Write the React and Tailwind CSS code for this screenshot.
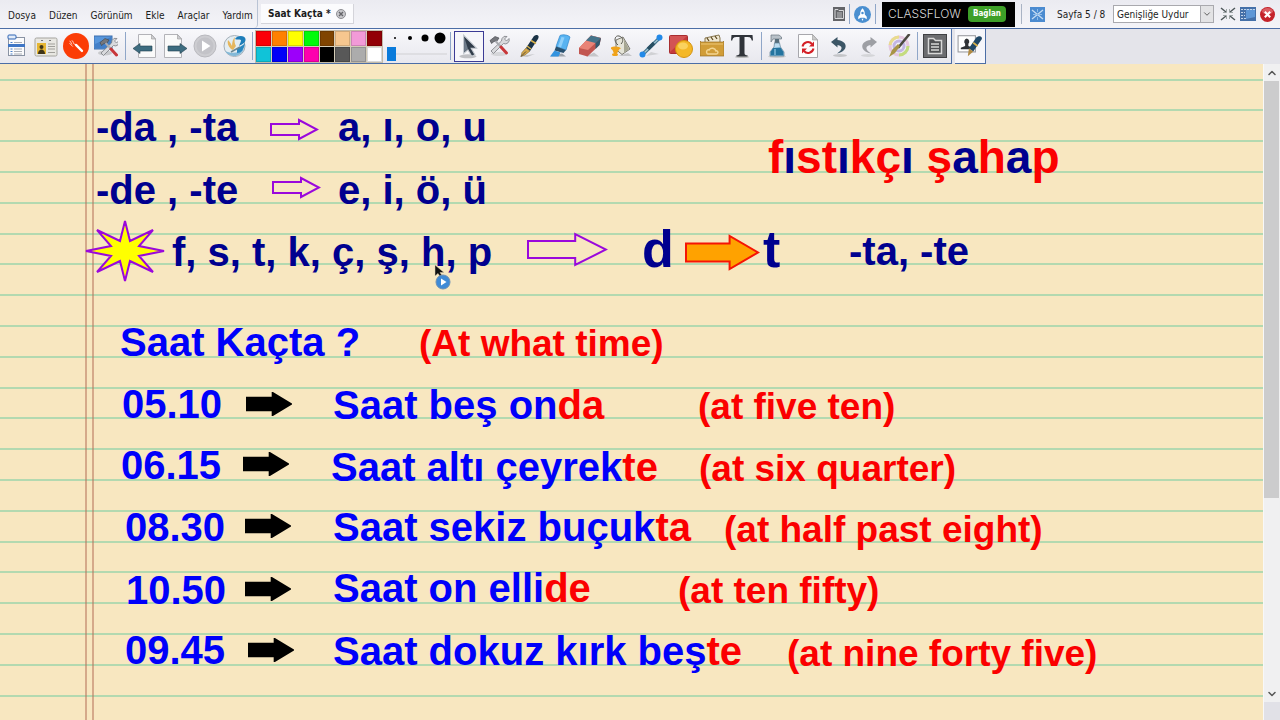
import { useState } from "react";
import { ChevronDown, ChevronUp } from "lucide-react";

const NAVY = "text-[#00008f]";
const BLUE = "text-[#0000fa]";
const RED = "text-[#fb0000]";

const menus = ["Dosya", "Düzen", "Görünüm", "Ekle", "Araçlar", "Yardım"];

const palette = [
  { name: "Kırmızı", cls: "bg-[#fb0007]" },
  { name: "Turuncu", cls: "bg-[#ff8000]" },
  { name: "Sarı", cls: "bg-[#ffff00]" },
  { name: "Yeşil", cls: "bg-[#00fb0a]" },
  { name: "Kahverengi", cls: "bg-[#804400]" },
  { name: "Ten", cls: "bg-[#f6c78f]" },
  { name: "Pembe", cls: "bg-[#f29ad8]" },
  { name: "Bordo", cls: "bg-[#920006]" },
  { name: "Turkuaz", cls: "bg-[#10c3d8]" },
  { name: "Mavi", cls: "bg-[#0000f8]" },
  { name: "Mor", cls: "bg-[#9c00fa]" },
  { name: "Eflatun", cls: "bg-[#fd00ae]" },
  { name: "Siyah", cls: "bg-black" },
  { name: "Koyu gri", cls: "bg-[#585858]" },
  { name: "Gri", cls: "bg-[#acacac]" },
  { name: "Beyaz", cls: "bg-white" },
];

// Text objects that sit freely on the slide
const labels = [
  { x: 96, y: 43, size: "text-[40px]", parts: [["-da , -ta", NAVY]] },
  { x: 338, y: 43, size: "text-[40px]", parts: [["a, ı, o, u", NAVY]] },
  { x: 96, y: 106, size: "text-[40px]", parts: [["-de , -te", NAVY]] },
  { x: 338, y: 106, size: "text-[40px]", parts: [["e, i, ö, ü", NAVY]] },
  { x: 172, y: 168, size: "text-[40px]", parts: [["f, s, t, k, ç, ş, h, p", NAVY]] },
  {
    x: 768,
    y: 70,
    size: "text-[46px]",
    parts: [
      ["f", RED], ["ı", NAVY], ["st", RED], ["ı", NAVY], ["kç", RED], ["ı", NAVY],
      [" ş", RED], ["a", NAVY], ["h", RED], ["a", NAVY], ["p", RED],
    ],
  },
  { x: 642, y: 159, size: "text-[52px]", parts: [["d", NAVY]] },
  { x: 763, y: 159, size: "text-[52px]", parts: [["t", NAVY]] },
  { x: 849, y: 167, size: "text-[40px]", parts: [["-ta, -te", NAVY]] },
  { x: 120, y: 258, size: "text-[40px]", parts: [["Saat Kaçta ?", BLUE]] },
  { x: 419, y: 261, size: "text-[37px]", parts: [["(At what time)", RED]] },
  { x: 122, y: 320, size: "text-[40px]", parts: [["05.10", BLUE]] },
  { x: 333, y: 321, size: "text-[40px]", parts: [["Saat beş on", BLUE], ["da", RED]] },
  { x: 698, y: 324, size: "text-[37px]", parts: [["(at five ten)", RED]] },
  { x: 121, y: 381, size: "text-[40px]", parts: [["06.15", BLUE]] },
  { x: 331, y: 383, size: "text-[40px]", parts: [["Saat altı çeyrek", BLUE], ["te", RED]] },
  { x: 699, y: 386, size: "text-[37px]", parts: [["(at six quarter)", RED]] },
  { x: 125, y: 443, size: "text-[40px]", parts: [["08.30", BLUE]] },
  { x: 333, y: 443, size: "text-[40px]", parts: [["Saat sekiz buçuk", BLUE], ["ta", RED]] },
  { x: 724, y: 447, size: "text-[37px]", parts: [["(at half past eight)", RED]] },
  { x: 126, y: 506, size: "text-[40px]", parts: [["10.50", BLUE]] },
  { x: 333, y: 504, size: "text-[40px]", parts: [["Saat on elli", BLUE], ["de", RED]] },
  { x: 678, y: 508, size: "text-[37px]", parts: [["(at ten fifty)", RED]] },
  { x: 125, y: 566, size: "text-[40px]", parts: [["09.45", BLUE]] },
  { x: 333, y: 567, size: "text-[40px]", parts: [["Saat dokuz kırk beş", BLUE], ["te", RED]] },
  { x: 787, y: 571, size: "text-[37px]", parts: [["(at nine forty five)", RED]] },
];

const arrows = [
  { x: 269, y: 54, w: 50, h: 23, kind: "outline" },
  { x: 271, y: 112, w: 50, h: 23, kind: "outline" },
  { x: 526, y: 168, w: 82, h: 35, kind: "outline" },
  { x: 684, y: 170, w: 76, h: 37, kind: "orange" },
  { x: 246, y: 328, w: 46, h: 24, kind: "black" },
  { x: 243, y: 388, w: 46, h: 24, kind: "black" },
  { x: 245, y: 450, w: 46, h: 24, kind: "black" },
  { x: 245, y: 513, w: 46, h: 24, kind: "black" },
  { x: 248, y: 574, w: 46, h: 24, kind: "black" },
];

function Svg({ children, className = "w-6 h-6", viewBox = "0 0 24 24" }) {
  return (
    <svg viewBox={viewBox} className={className} fill="none" aria-hidden="true">
      {children}
    </svg>
  );
}

const Hammer = () => (
  <>
    <path d="M15 4.500a4 4 0 0 1 5-2l-2.500 2.500 2 2 2.500-2.500a4 4 0 0 1-5.500 5L6.500 19.500 4 17 14.500 7z" fill="#d9dadd" stroke="#7b7d83" strokeWidth=".8" />
    <path d="M3 6.500 8 2.500l4 1.500-2 3-3 .5-2.500 2z" fill="#75777c" stroke="#3f4146" strokeWidth=".6" />
    <path d="m8.500 7 6 6.500" stroke="#a9abb0" strokeWidth="2" />
    <path d="m14 13 5.500 6" stroke="#c8373a" strokeWidth="3" strokeLinecap="round" />
  </>
);

const icons = {
  menu: (
    <Svg>
      <rect x="4.500" y="3.500" width="16" height="18" fill="#fbfbfc" stroke="#8a93a3" />
      <rect x="4" y="1" width="8" height="4" rx="1" fill="#e3ecf8" stroke="#2f64b5" />
      <path d="M4 11.500h17" stroke="#3f76c5" strokeWidth="3" />
      <path d="M10 8.500h8M10 15h8M10 17.500h8M10 20h8" stroke="#a9adb5" />
      <path d="M6.500 8.500h2M6.500 15h2M6.500 17.500h2M6.500 20h2" stroke="#4b80c9" />
    </Svg>
  ),
  profile: (
    <Svg>
      <rect x="1" y="4" width="22" height="18" rx="1.500" fill="#e8e7e2" stroke="#a5a49e" />
      <rect x="3" y="9" width="9" height="11" fill="#e6b633" />
      <circle cx="7.500" cy="13" r="2" fill="#3e3418" />
      <path d="M4 20c0-6 7-6 7 0z" fill="#3e3418" />
      <path d="M14 10h7M14 12.500h7M14 15h7M14 18.500h7" stroke="#a09f9a" />
      <path d="M7 6.500h2M15 6.500h2" stroke="#777" />
    </Svg>
  ),
  redPen: (
    <Svg className="w-[26px] h-[26px]">
      <circle cx="12" cy="12" r="12" fill="#fb3c06" />
      <path d="m12 11 5.500 5.500" stroke="#fff" strokeWidth="2.200" strokeLinecap="round" />
      <path d="M6 7.500c2 0 1 3 2.500 3M8 7c2 0 1 3.500 3 3.500M6 9.500l3 3" stroke="#ffe3da" strokeWidth=".8" />
    </Svg>
  ),
  desktopTools: (
    <Svg>
      <rect x="0" y="2" width="18" height="13" fill="#5796dc" stroke="#3c6eae" />
      <path d="M1 10 17 3v11H1z" fill="#2d68b4" opacity=".5" />
      <ellipse cx="11" cy="19" rx="7" ry="2.500" fill="#c9cacd" />
      <g transform="translate(3 2)"><Hammer /></g>
    </Svg>
  ),
  prev: (
    <Svg>
      <path d="M5.500.5h13l4 4.500v18.500h-17z" fill="#fafafa" stroke="#b3b3b8" />
      <path d="M18.500.5V5h4z" fill="#cfcfd3" stroke="#999" strokeWidth=".6" />
      <path d="m0 14.500 7-5V12h12v5H7v2.500z" fill="#3d6c80" stroke="#24424f" strokeWidth=".6" />
    </Svg>
  ),
  next: (
    <Svg>
      <path d="M1.500.5h13l4 4.500v18.500h-17z" fill="#fafafa" stroke="#b3b3b8" />
      <path d="M14.500.5V5h4z" fill="#cfcfd3" stroke="#999" strokeWidth=".6" />
      <path d="m24 14.500-7-5V12H5v5h12v2.500z" fill="#3d6c80" stroke="#24424f" strokeWidth=".6" />
    </Svg>
  ),
  play: (
    <Svg>
      <circle cx="12" cy="12" r="11" fill="#cdcdd1" stroke="#b9b9be" />
      <circle cx="12" cy="12" r="8.500" fill="#c3c3c8" />
      <path d="m9 6.500 8.500 5.500L9 17.500z" fill="#fff" />
    </Svg>
  ),
  globe: (
    <Svg>
      <circle cx="11.500" cy="12" r="10.500" fill="#e4edf2" stroke="#a4afb8" />
      <path d="M2 17c5 7 15 7 19-2-4 4-13 5-19 2z" fill="#84b9d8" />
      <path d="M8 15C5 12 4 9 5 6c2 2 3 4 4 6 0-4 1-7 3-9-1 5 0 7 1 9l-3 4z" fill="#e6b65c" />
      <path d="M12 5c2-4 10-4 10.500 0S19 10 16 12c1-3 2-4 2-6-2-1-4 0-6-1z" fill="#1d7db9" />
      <path d="M14 15c3-3 6-3 8-6-1 7-4 10-8 10z" fill="#2b88c0" />
      <path d="m8 18 9-5" stroke="#6c8792" strokeWidth="1.500" />
    </Svg>
  ),
  select: (
    <Svg className="w-[26px] h-[26px]">
      <ellipse cx="11" cy="21.500" rx="8" ry="1.800" fill="#bfc0c4" />
      <path d="M7 2v17l4-3.500 3.500 6 3-1.500-3.500-6h5z" fill="#313d4b" stroke="#c5cad1" strokeWidth="1" />
      <path d="M7.500 3.500v14l3.500-3z" fill="#6f7c8b" />
    </Svg>
  ),
  tools: (
    <Svg><ellipse cx="12" cy="20" rx="8" ry="2" fill="#d5d6d9" /><Hammer /></Svg>
  ),
  pen: (
    <Svg>
      <path d="m3 22 15-2-8 3z" fill="#c5c6c9" />
      <path d="M19 1c3 0 3 2 2 4l-8 12-4-3 8-12z" fill="#1b3346" />
      <path d="m14 6.500 5 3M10 12l4 3" stroke="#d9b24c" strokeWidth="1.500" />
      <path d="m9 14 4 3-5 4-4 1.500 1-4z" fill="#d6a84a" stroke="#80652b" strokeWidth=".6" />
      <path d="m4 22.500 5-5" stroke="#343434" strokeWidth=".8" />
    </Svg>
  ),
  highlighter: (
    <Svg>
      <path d="M2 22.500h16l-4-3z" fill="#9fa5ac" />
      <path d="M12 1.500c3-1.500 8-.5 10 1.500l-4 13-10-3.500z" fill="#58b3f1" stroke="#2f86cb" strokeWidth=".7" />
      <path d="m13.500 3 3 .5-3.500 10-3-1z" fill="#8fd0fa" />
      <path d="m8 12.500 10 3.500-2.500 3-9-2.500z" fill="#27506f" />
      <path d="m6.500 16.500 6 2-2 4H2z" fill="#3293df" />
    </Svg>
  ),
  eraser: (
    <Svg>
      <path d="M8 22.500h13l-5-4z" fill="#c5c6c9" />
      <path d="M13 1.500 23 4l-1.500 7-12 11.500L1 20v-6z" fill="#c25650" />
      <path d="m13 1.500 10 2.500-13 12L1 14z" fill="#e98377" />
      <path d="m13 1.500 10 2.500-5.500 5L8 6.500z" fill="#44738a" />
      <path d="m23 4-1.500 7-4 4v-6z" fill="#305a70" />
    </Svg>
  ),
  fill: (
    <Svg>
      <path d="M9 22h14l-4-3z" fill="#c5c6c9" />
      <path d="M7 6 14 3l7 12-8 5.500-6-5z" fill="#e5e4d8" stroke="#6c6b62" strokeWidth=".9" />
      <path d="M15 5.500 20 15l-5 4z" fill="#a6a693" />
      <path d="M9 11C4 7 6 1 10 2s5 5 2 8" stroke="#57574f" strokeWidth="1" />
      <path d="M2 13.500c3-2 9-1 10 1-3 0-3 6-5.500 6S5 16 2 15z" fill="#f0a31a" />
      <ellipse cx="6" cy="20.500" rx="3" ry="1.600" fill="#f0a31a" />
    </Svg>
  ),
  line: (
    <Svg>
      <path d="m7 22 13-2-8-2z" fill="#d0d1d4" />
      <path d="M4 20 20.500 4" stroke="#40738d" strokeWidth="3.500" />
      <path d="M4 20 20.500 4" stroke="#a5c7d4" strokeWidth="1.200" />
      <path d="m9 15 6-6" stroke="#294f63" strokeWidth="3.500" />
      <circle cx="3.500" cy="20.500" r="3" fill="#2289e8" />
      <circle cx="20.500" cy="3.500" r="3" fill="#2289e8" />
    </Svg>
  ),
  shape: (
    <Svg>
      <rect x=".5" y="1.500" width="18" height="18" rx="1" fill="#c53a3c" stroke="#a82d30" />
      <path d="M1 2h17L1 18z" fill="#dc6664" opacity=".6" />
      <circle cx="15" cy="15" r="8.500" fill="#f4b827" stroke="#d4930f" />
      <ellipse cx="14" cy="12" rx="5" ry="3.500" fill="#fad25e" />
    </Svg>
  ),
  media: (
    <Svg>
      <path d="m5 4 14-3 1 3v6H5z" fill="#f0e8d2" stroke="#6f5a2c" strokeWidth=".8" />
      <path d="m7 4 2 3M11 3l2 3M15 2l2 3" stroke="#5e4b22" strokeWidth="1.300" />
      <path d="M1 8h22l1-1v15H0V7z" fill="#d19d38" stroke="#98702a" strokeWidth=".7" />
      <path d="M1 9h22v2H1z" fill="#dfb257" />
      <path d="M9 16c-3-1-3 4-1 4h8c3 0 2-4 0-3-1-3-5-4-7-1z" stroke="#f3d591" strokeWidth="1.500" />
    </Svg>
  ),
  text: (
    <Svg>
      <ellipse cx="12" cy="23" rx="7" ry="1" fill="#bbb" />
      <path d="M1.500 1h21l.5 5.500h-1.200C21 3.500 20 3 17 3h-2.500v16c0 2 1 2.200 3 2.300V22.500h-11v-1.200c2-.1 3-.3 3-2.300V3H7C4 3 3 3.500 2.200 6.500H1z" fill="#30343a" />
    </Svg>
  ),
  spray: (
    <Svg>
      <ellipse cx="12" cy="22.500" rx="9" ry="1.500" fill="#ccc" />
      <path d="M6 1h8l2.500 2v2H8l-2 3z" fill="#b8c1c8" stroke="#6b777f" strokeWidth=".7" />
      <path d="M10 5h4l.5 4h-5z" fill="#566d7a" />
      <path d="M9.500 9h5l1 4 3.500 5v4H5v-4l4-5z" fill="#bcdcf0" stroke="#638396" strokeWidth=".7" />
      <path d="m8 14 7.500-.5 3 4.500v3.500h-13V18z" fill="#24749f" />
      <path d="M10 15v6" stroke="#7fb9d8" strokeWidth="1.500" />
    </Svg>
  ),
  reset: (
    <Svg>
      <path d="M2.500.5h14l5 5.500v17.500h-19z" fill="#fdfdfd" stroke="#a7a7ac" />
      <path d="M16.500.5V6h5z" fill="#ccc" stroke="#999" strokeWidth=".6" />
      <path d="M6.500 12.500a5.500 5.500 0 0 1 9.500-2.500M17.500 14.500a5.500 5.500 0 0 1-9.500 2.500" stroke="#d42027" strokeWidth="2" />
      <path d="M18 7.500v5h-5zM6 19.500v-5h5z" fill="#d42027" />
    </Svg>
  ),
  undo: (
    <Svg>
      <ellipse cx="13" cy="21.500" rx="7" ry="1.500" fill="#c4c5c8" />
      <path d="M4 8 10.500 3v3C21 7 22 17 10 19.500c6-4 6-7.500.5-8.500v2.500z" fill="#3c5666" />
    </Svg>
  ),
  redo: (
    <Svg>
      <ellipse cx="11" cy="21.500" rx="7" ry="1.500" fill="#d4d5d8" />
      <path d="M20 8 13.500 3v3C3 7 2 17 14 19.500c-6-4-6-7.500-.5-8.500v2.500z" fill="#9d9fa4" />
    </Svg>
  ),
  colours: (
    <Svg>
      <circle cx="11" cy="12" r="9" stroke="#e5c8df" strokeWidth="3" />
      <path d="M2 11a9 9 0 0 1 9-8" stroke="#e9dc8c" strokeWidth="3" />
      <path d="M11 21a9 9 0 0 0 9-9" stroke="#c3dd7e" strokeWidth="3" />
      <circle cx="11" cy="12" r="5" stroke="#c3b6e4" strokeWidth="3" />
      <path d="M21.500 0 10 14" stroke="#4b4940" strokeWidth="2.500" />
      <path d="m12 12-5 7-6 4 3-7 6-6z" fill="#a89445" />
    </Svg>
  ),
  browser: (
    <Svg>
      <rect x=".5" y=".5" width="23" height="23" fill="#6c6d70" stroke="#404144" />
      <path d="M5.500 4.500h5l2 2h6v13h-13z" fill="#4f5053" stroke="#d8d8d8" strokeWidth="1.500" />
      <path d="M8 10h8M8 13h8M8 16h8" stroke="#d8d8d8" strokeWidth="1.300" />
    </Svg>
  ),
  dualUser: (
    <Svg className="w-[26px] h-[26px]">
      <rect x="1" y="2.500" width="16" height="15" fill="#fff" stroke="#9a9ba0" />
      <path d="M9 5a3 3 0 0 1 1.500 5v2l4 1.500V15h-11v-1.500l4-1.500v-2A3 3 0 0 1 9 5z" fill="#2f3135" />
      <path d="M20 3c3 0 4 2 2 4l-7 10-4-3 7-10z" fill="#1f4766" />
      <path d="m15 9 4 3" stroke="#d9b24c" strokeWidth="1.500" />
      <path d="m11 14 4 3-5 4.500z" fill="#b08a43" />
    </Svg>
  ),
};

function ToolButton({ icon, label, className = "w-[30px]" }) {
  return (
    <button type="button" aria-label={label} className={`h-full shrink-0 flex items-center justify-center ${className}`}>
      {icons[icon]}
    </button>
  );
}

function Divider() {
  return <div className="w-px h-7 bg-[#8fa6c8] shrink-0" />;
}

function TopBar() {
  const [zoom, setZoom] = useState("Genişliğe Uydur");

  return (
    <header className="h-7 flex items-center shrink-0 bg-linear-to-b from-[#ebebf1] to-[#f4f4f8]">
      <nav className="h-full w-[258px] flex items-center gap-[13px] pl-2 pt-[2px] rounded-br border-r border-[#b9c3d4] shrink-0">
        {menus.map((m) => (
          <button type="button" key={m} className="whitespace-nowrap">{m}</button>
        ))}
      </nav>

      <div className="h-5 ml-[3px] px-[7px] flex items-center gap-[5px] bg-[#fbfbfd] border-r border-b border-[#d4d4da] shrink-0">
        <span className="font-bold whitespace-nowrap">Saat Kaçta *</span>
        <button type="button" aria-label="Sekmeyi kapat">
          <Svg className="w-[10px] h-[10px]" viewBox="0 0 10 10">
            <circle cx="5" cy="5" r="4.500" fill="#c9c9cd" stroke="#8e8e93" />
            <path d="m3 3 4 4M7 3 3 7" stroke="#65656a" strokeWidth="1.400" />
          </Svg>
        </button>
      </div>

      <div className="h-full ml-auto flex items-center shrink-0">
        <button type="button" aria-label="Tarayıcı">
          <Svg className="w-[14px] h-[14px]" viewBox="0 0 14 14">
            <rect x="1" y="0" width="12" height="14" fill="#636468" />
            <path d="M3 2.500h3l1 1h4.500v8H3z" stroke="#d7d7d9" />
            <path d="M5 6h5M5 8h5M5 10h5" stroke="#d7d7d9" strokeWidth=".8" />
          </Svg>
        </button>
        <div className="w-px h-5 ml-[3px] bg-[#8fa6c8]" />
        <button type="button" aria-label="Başlat" className="mx-1">
          <Svg className="w-[17px] h-[17px]" viewBox="0 0 18 18">
            <circle cx="9" cy="9" r="9" fill="#4a8fd0" />
            <path d="M9 2.500c2 2 2.500 4 2.500 6.500l2 2.500V14l-2.500-1.500H7L4.500 14v-2.500l2-2.500C6.500 6.500 7 4.500 9 2.500z" fill="#fff" />
            <circle cx="9" cy="7.500" r="1.300" fill="#4a8fd0" />
            <path d="M8 13.500h2L9 16z" fill="#fff" />
          </Svg>
        </button>
        <div className="w-px h-5 bg-[#8fa6c8]" />
        <div className="w-[133px] h-[25px] ml-[6px] pl-[6px] pr-[9px] flex items-center justify-between bg-black">
          <span className="text-[#d8d8d8] font-light text-[12px] font-[Inter,sans-serif]">CLASSFLOW</span>
          <button type="button" className="w-[38px] h-4 rounded bg-[#3d9f28] text-white text-[8px] leading-4 font-bold">
            Bağlan
          </button>
        </div>
        <div className="w-px h-5 ml-[6px] bg-[#a9b3c4]" />
        <button type="button" aria-label="Araç kutusu" className="ml-2">
          <Svg className="w-[15px] h-[15px]" viewBox="0 0 15 15">
            <rect width="15" height="15" fill="#4b8bd0" />
            <path d="m2 3 11 9M13 3 2 12" stroke="#c6dcf3" strokeWidth="1.300" />
            <path d="M7.500 2v3M7.500 10v3M3 7.500h9" stroke="#8ebce9" />
          </Svg>
        </button>
        <label htmlFor="zoom" className="ml-3 w-[56px] whitespace-nowrap">Sayfa 5 / 8</label>
        <div className="relative">
          <select
            id="zoom"
            value={zoom}
            onChange={(e) => setZoom(e.target.value)}
            className="w-[101px] h-[18px] pl-[3px] appearance-none bg-white border border-[#a9a9ae] outline-none"
          >
            <option>Genişliğe Uydur</option>
            <option>Sayfaya Uydur</option>
          </select>
          <div className="absolute right-0 top-0 w-[14px] h-[18px] flex items-center justify-center bg-[#e3e3e5] border border-[#a9a9ae] pointer-events-none">
            <ChevronDown className="w-[10px] h-[10px] text-[#444]" />
          </div>
        </div>
        <button type="button" aria-label="Sayfayı sığdır" className="ml-[6px]">
          <Svg className="w-4 h-4" viewBox="0 0 16 16">
            <path d="m1 2 5 4M15 2l-5 4M1 14l5-4M15 14l-5-4" stroke="#4f585b" strokeWidth="1.500" />
            <path d="M6.500 3v3.500H3M9.500 3v3.500H13M6.500 13V9.500H3M9.500 13V9.500H13" stroke="#8b9694" strokeWidth=".8" />
          </Svg>
        </button>
        <button type="button" aria-label="Pencereyi küçült" className="ml-1">
          <Svg className="w-4 h-[14px]" viewBox="0 0 16 14">
            <rect width="16" height="14" fill="#4570a8" />
            <path d="M6 2h9v8l-9 2z" fill="#5f97d6" />
            <path d="M1 2.500h14M1 5.500h4M1 8.500h4M1 11.500h6" stroke="#c4d4e8" strokeDasharray="2 1" />
          </Svg>
        </button>
        <button type="button" aria-label="Kapat" className="ml-1 mr-[5px]">
          <Svg className="w-[15px] h-[15px]" viewBox="0 0 14 14">
            <circle cx="7" cy="7" r="7" fill="#c4222a" />
            <ellipse cx="7" cy="4" rx="5" ry="3" fill="#e4757a" opacity=".7" />
            <path d="m4.500 4.500 5 5M9.500 4.500l-5 5" stroke="#fff" strokeWidth="2" />
          </Svg>
        </button>
      </div>
    </header>
  );
}

function ColourPalette() {
  return (
    <div className="w-32 grid grid-cols-8 gap-px bg-[#d5cdb8] border border-[#c3bba9] shrink-0">
      {palette.map((c) => (
        <button type="button" key={c.name} aria-label={c.name} className={`h-[15px] border border-black/15 ${c.cls}`} />
      ))}
    </div>
  );
}

function PenWidth() {
  return (
    <div className="w-[64px] pl-1 flex flex-col gap-[2px] shrink-0">
      <Svg className="w-[60px] h-[14px]" viewBox="0 0 60 14">
        <circle cx="8" cy="7" r="1" fill="#000" />
        <circle cx="23" cy="7" r="2" fill="#000" />
        <circle cx="38" cy="7" r="3.500" fill="#000" />
        <circle cx="53" cy="7" r="5.500" fill="#000" />
      </Svg>
      <input
        type="range"
        min="1"
        max="50"
        defaultValue="1"
        aria-label="Kalem kalınlığı"
        className="w-[60px] h-[14px] appearance-none bg-transparent
                   [&::-webkit-slider-runnable-track]:h-[2px] [&::-webkit-slider-runnable-track]:bg-[#dedee2]
                   [&::-webkit-slider-thumb]:appearance-none [&::-webkit-slider-thumb]:w-[9px] [&::-webkit-slider-thumb]:h-[14px]
                   [&::-webkit-slider-thumb]:-mt-[6px] [&::-webkit-slider-thumb]:bg-[#0a7bdb]"
      />
    </div>
  );
}

function Toolbar() {
  return (
    <div className="h-9 flex shrink-0 bg-[#e4e4ea] border-t border-[#4c6ea6]">
      <div className="w-[952px] h-full flex items-center shrink-0 bg-linear-to-b from-[#f8f8fb] to-[#e8e8ee] border-b border-r border-[#4c6ea6] pl-px">
        <ToolButton icon="menu" label="Ana menü" />
        <ToolButton icon="profile" label="Profil" />
        <ToolButton icon="redPen" label="Açıklama" />
        <ToolButton icon="desktopTools" label="Masaüstü araçları" />
        <div className="w-[9px] flex justify-center shrink-0"><Divider /></div>
        <ToolButton icon="prev" label="Önceki sayfa" />
        <ToolButton icon="next" label="Sonraki sayfa" />
        <ToolButton icon="play" label="Oynat" />
        <ToolButton icon="globe" label="Web" />
        <div className="w-[5px] flex justify-center shrink-0"><Divider /></div>
        <ColourPalette />
        <PenWidth />
        <div className="w-[7px] flex justify-center shrink-0"><Divider /></div>
        <ToolButton icon="select" label="Seç" className="w-[30px] max-h-[31px] border border-[#3b3b95] bg-[#f6f6fa]" />
        <div className="w-[273px] h-full flex justify-between shrink-0">
          <ToolButton icon="tools" label="Araçlar" />
          <ToolButton icon="pen" label="Kalem" />
          <ToolButton icon="highlighter" label="Vurgulayıcı" />
          <ToolButton icon="eraser" label="Silgi" />
          <ToolButton icon="fill" label="Doldur" />
          <ToolButton icon="line" label="Bağlayıcı" />
          <ToolButton icon="shape" label="Şekil" />
          <ToolButton icon="media" label="Kaynaklar" />
          <ToolButton icon="text" label="Metin" />
        </div>
        <div className="w-[5px] flex justify-end shrink-0"><Divider /></div>
        <div className="w-[153px] h-full flex justify-between shrink-0">
          <ToolButton icon="spray" label="Temizle" />
          <ToolButton icon="reset" label="Sayfayı sıfırla" />
          <ToolButton icon="undo" label="Geri al" />
          <ToolButton icon="redo" label="Yinele" />
          <ToolButton icon="colours" label="Renkler" />
        </div>
        <div className="w-[5px] flex justify-center shrink-0"><Divider /></div>
        <ToolButton icon="browser" label="Sayfa tarayıcısı" />
      </div>
      <div className="h-full ml-[3px] flex items-center bg-[#f6f6fa] border-b border-r border-[#4c6ea6]">
        <ToolButton icon="dualUser" label="Çift kullanıcı" />
      </div>
    </div>
  );
}

function RuledPaper() {
  return (
    <svg className="absolute inset-0 w-full h-full" aria-hidden="true">
      <defs>
        <pattern id="ruled" width="8" height="154" patternUnits="userSpaceOnUse">
          <path d="M0 16h8M0 46h8M0 77h8M0 108h8M0 139h8" stroke="#b3d9b0" strokeWidth="2" />
        </pattern>
      </defs>
      <rect width="100%" height="100%" fill="url(#ruled)" />
      <path d="M86 0v900M93 0v900" stroke="#b5705a" strokeOpacity=".7" strokeWidth="1.500" />
    </svg>
  );
}

function Arrow({ x, y, w, h, kind }) {
  const fill = kind === "outline" ? "none" : kind === "orange" ? "#ffa200" : "#000";
  const stroke = kind === "outline" ? "#9a08dc" : kind === "orange" ? "#f51505" : "#000";
  const lw = kind === "black" ? 1 : 2;
  const neck = kind === "black" ? w * 0.58 : w * 0.6;
  const top = kind === "black" ? h * 0.24 : h * 0.26;
  const points = [
    [lw, top], [neck, top], [neck, lw], [w - lw, h / 2],
    [neck, h - lw], [neck, h - top], [lw, h - top],
  ].map((p) => p.join(",")).join(" ");

  return (
    <svg width={w} height={h} className="absolute" style={{ left: x, top: y }} aria-hidden="true">
      <polygon points={points} fill={fill} stroke={stroke} strokeWidth="2" />
    </svg>
  );
}

function Board() {
  return (
    <main className="relative flex-1 overflow-hidden bg-[#f8e7c0] font-['Liberation_Sans',Arial,sans-serif]">
      <RuledPaper />

      <svg width="82" height="64" viewBox="-41 -32 82 64" className="absolute left-[84px] top-[155px]" aria-hidden="true">
        <polygon
          points="0,-30 5,-10 28,-21 14,-5 39,0 14,5 28,21 5,10 0,30 -5,10 -28,21 -14,5 -39,0 -14,-5 -28,-21 -5,-10"
          fill="#ffff00"
          stroke="#9a08dc"
          strokeWidth="2"
        />
      </svg>

      {arrows.map((a) => (
        <Arrow key={`${a.x}-${a.y}`} {...a} />
      ))}

      {labels.map((l) => (
        <p
          key={`${l.x}-${l.y}`}
          className={`absolute whitespace-pre font-bold leading-none ${l.size}`}
          style={{ left: l.x, top: l.y }}
        >
          {l.parts.map(([text, color], i) => (
            <span key={i} className={color}>{text}</span>
          ))}
        </p>
      ))}

      {/* Mouse pointer with the play badge */}
      <svg width="20" height="28" className="absolute left-[433px] top-[200px]" aria-hidden="true">
        <path d="M2 1v11l3-2.500 2 3 2-1-2-3h4z" fill="#111" stroke="#d8cdb0" strokeWidth=".5" />
        <circle cx="10" cy="18" r="7" fill="#3f8ad6" stroke="#6b8fb5" />
        <path d="m8 14.500 5.500 3.500L8 21.500z" fill="#fff" />
      </svg>
    </main>
  );
}

function ScrollBar() {
  return (
    <div className="w-[17px] flex flex-col shrink-0 bg-[#f0f0f1] border-l border-[#f8f8f8]">
      <button type="button" aria-label="Yukarı kaydır" className="h-[17px] flex items-center justify-center">
        <ChevronUp className="w-3 h-3 text-[#555]" strokeWidth={3} />
      </button>
      <div className="flex-1 flex flex-col">
        <div className="h-[69%] mr-px bg-[#cccccd]" />
      </div>
      <button type="button" aria-label="Aşağı kaydır" className="h-[17px] flex items-center justify-center">
        <ChevronDown className="w-3 h-3 text-[#555]" strokeWidth={3} />
      </button>
      <div className="h-[18px] bg-[#e1e1e7]" />
    </div>
  );
}

export default function App() {
  return (
    <div className="h-screen flex flex-col overflow-hidden bg-[#e4e4ea] text-[#1c1c1c] text-[10px] font-['DejaVu_Sans_Condensed','DejaVu_Sans',sans-serif]">
      <TopBar />
      <Toolbar />
      <div className="flex-1 flex min-h-0">
        <Board />
        <ScrollBar />
      </div>
    </div>
  );
}
